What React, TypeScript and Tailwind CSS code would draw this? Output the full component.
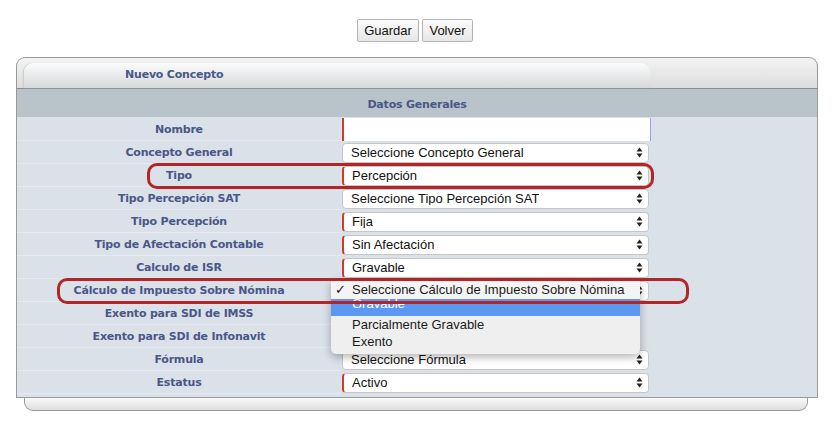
import React from "react";

type Row = {
  label: string;
  kind: "input" | "select" | "none";
  value?: string;
  req?: boolean;
};

const rows: Row[] = [
  { label: "Nombre", kind: "input" },
  { label: "Concepto General", kind: "select", value: "Seleccione Concepto General" },
  { label: "Tipo", kind: "select", value: "Percepción", req: true },
  { label: "Tipo Percepción SAT", kind: "select", value: "Seleccione Tipo Percepción SAT" },
  { label: "Tipo Percepción", kind: "select", value: "Fija", req: true },
  { label: "Tipo de Afectación Contable", kind: "select", value: "Sin Afectación", req: true },
  { label: "Calculo de ISR", kind: "select", value: "Gravable", req: true },
  {
    label: "Cálculo de Impuesto Sobre Nómina",
    kind: "select",
    value: "Seleccione Cálculo de Impuesto Sobre Nómina",
  },
  { label: "Exento para SDI de IMSS", kind: "none" },
  { label: "Exento para SDI de Infonavit", kind: "none" },
  { label: "Fórmula", kind: "select", value: "Seleccione Fórmula" },
  { label: "Estatus", kind: "select", value: "Activo", req: true },
];

function Arrows() {
  return (
    <svg width="7" height="11" viewBox="0 0 7 11" className="shrink-0">
      <path d="M3.5 0.5 L6.5 4.5 L0.5 4.5 Z" fill="#222" />
      <path d="M3.5 10.5 L6.5 6.5 L0.5 6.5 Z" fill="#222" />
    </svg>
  );
}

function FakeSelect({ value, req }: { value: string; req?: boolean }) {
  return (
    <div
      className={
        "flex h-[20px] w-[307px] items-center justify-between rounded-[4px] border border-[#c6c6c6] bg-white pr-[5px] text-[13px] leading-none text-[#111] " +
        (req ? "border-l-2 border-l-[#d23a24] pl-[8px]" : "pl-[8px]")
      }
    >
      <span className="truncate">{value}</span>
      <Arrows />
    </div>
  );
}

export default function App() {
  return (
    <div
      className="relative h-[436px] w-[833px] overflow-hidden bg-white"
      style={{ fontFamily: '"Liberation Sans", Arial, sans-serif' }}
    >
      {/* botones */}
      <div className="flex justify-center gap-[3px] pr-[3px] pt-[19px]">
        <button className="h-[23px] w-[62px] rounded-[2px] border border-[#b4b4b4] bg-gradient-to-b from-[#fbfbfb] to-[#e6e6e6] text-[13px] text-[#111]">
          Guardar
        </button>
        <button className="h-[23px] w-[51px] rounded-[2px] border border-[#b4b4b4] bg-gradient-to-b from-[#fbfbfb] to-[#e6e6e6] text-[13px] text-[#111]">
          Volver
        </button>
      </div>

      {/* panel */}
      <div className="ml-[16px] mt-[15px] w-[802px]">
        <div className="h-[32px] rounded-t-[9px] border border-b-[#8c8c8c] border-[#9a9a9a] bg-gradient-to-b from-[#f4f4f4] to-[#dcdcdc] pl-[7px] pt-[5px]">
          <div className="flex h-[25px] w-[626px] items-center rounded-t-[9px] bg-gradient-to-b from-[#fbfbfb] to-[#d6d9db] pl-[101px] shadow-[-1px_0_1px_#c8c8c8]">
            <span
              className="text-[11px] font-bold tracking-[-0.2px] text-[#4a5788]"
              style={{ fontFamily: '"DejaVu Sans", Verdana, sans-serif' }}
            >
              Nuevo Concepto
            </span>
          </div>
        </div>

        <div
          className="border-x border-b border-[#9a9a9a] bg-[#dbe1e9] pb-[3px]"
          style={{ fontFamily: '"DejaVu Sans", Verdana, sans-serif' }}
        >
          <div className="flex h-[28px] items-center justify-center bg-[#b8c3ca] pt-[4px] text-[11px] font-bold tracking-[-0.2px] text-[#4a5788]">
            Datos Generales
          </div>
          <div className="pt-[1px]">
            {rows.map((r) => (
              <div key={r.label} className="flex h-[23px] items-center">
                <div className="flex h-full w-[324px] items-center justify-center border-b border-[#e7ebf1] pt-[2px] text-[11px] font-bold tracking-[-0.2px] text-[#4a5788]">
                  {r.label}
                </div>
                <div
                  className="flex h-full w-[310px] items-center pl-[1px]"
                  style={{ fontFamily: '"Liberation Sans", Arial, sans-serif' }}
                >
                  {r.kind === "input" && (
                    <div className="h-[23px] w-[309px] border-l-2 border-r border-l-[#d23a24] border-r-[#9c9cf2] bg-white" />
                  )}
                  {r.kind === "select" && <FakeSelect value={r.value!} req={r.req} />}
                </div>
              </div>
            ))}
          </div>
        </div>

        <div className="ml-[8px] h-[13px] w-[784px] rounded-b-[9px] border-x border-b border-[#9a9a9a] bg-gradient-to-b from-[#fafafa] to-[#dedede]" />
      </div>

      {/* menu desplegado */}
      <div className="absolute left-[331px] top-[280px] w-[309px] overflow-hidden rounded-b-[5px] rounded-t-[3px] bg-[#efefef] pb-[4px] text-[13px] leading-none text-[#1a1a1a] shadow-[0_3px_8px_rgba(0,0,0,0.3)]">
        <div className="flex h-[19px] items-center bg-[#f4f4f4]">
          <span className="w-[21px] pl-[4px] text-[13px]">✓</span>
          <span>Seleccione Cálculo de Impuesto Sobre Nómina</span>
        </div>
        <div className="h-[17px] overflow-hidden bg-[#5b98f2]">
          <div className="-mt-[2px] pl-[21px] text-white">Gravable</div>
        </div>
        <div className="flex h-[17px] items-center pl-[21px]">Parcialmente Gravable</div>
        <div className="flex h-[17px] items-center pl-[21px]">Exento</div>
      </div>

      {/* marcas rojas */}
      <div className="pointer-events-none absolute left-[147px] top-[163px] h-[26px] w-[507px] rounded-[10px] border-[3px] border-[#b2262a]" />
      <div className="pointer-events-none absolute left-[57px] top-[278px] h-[26px] w-[632px] rounded-[10px] border-[3px] border-[#b2262a]" />
    </div>
  );
}
